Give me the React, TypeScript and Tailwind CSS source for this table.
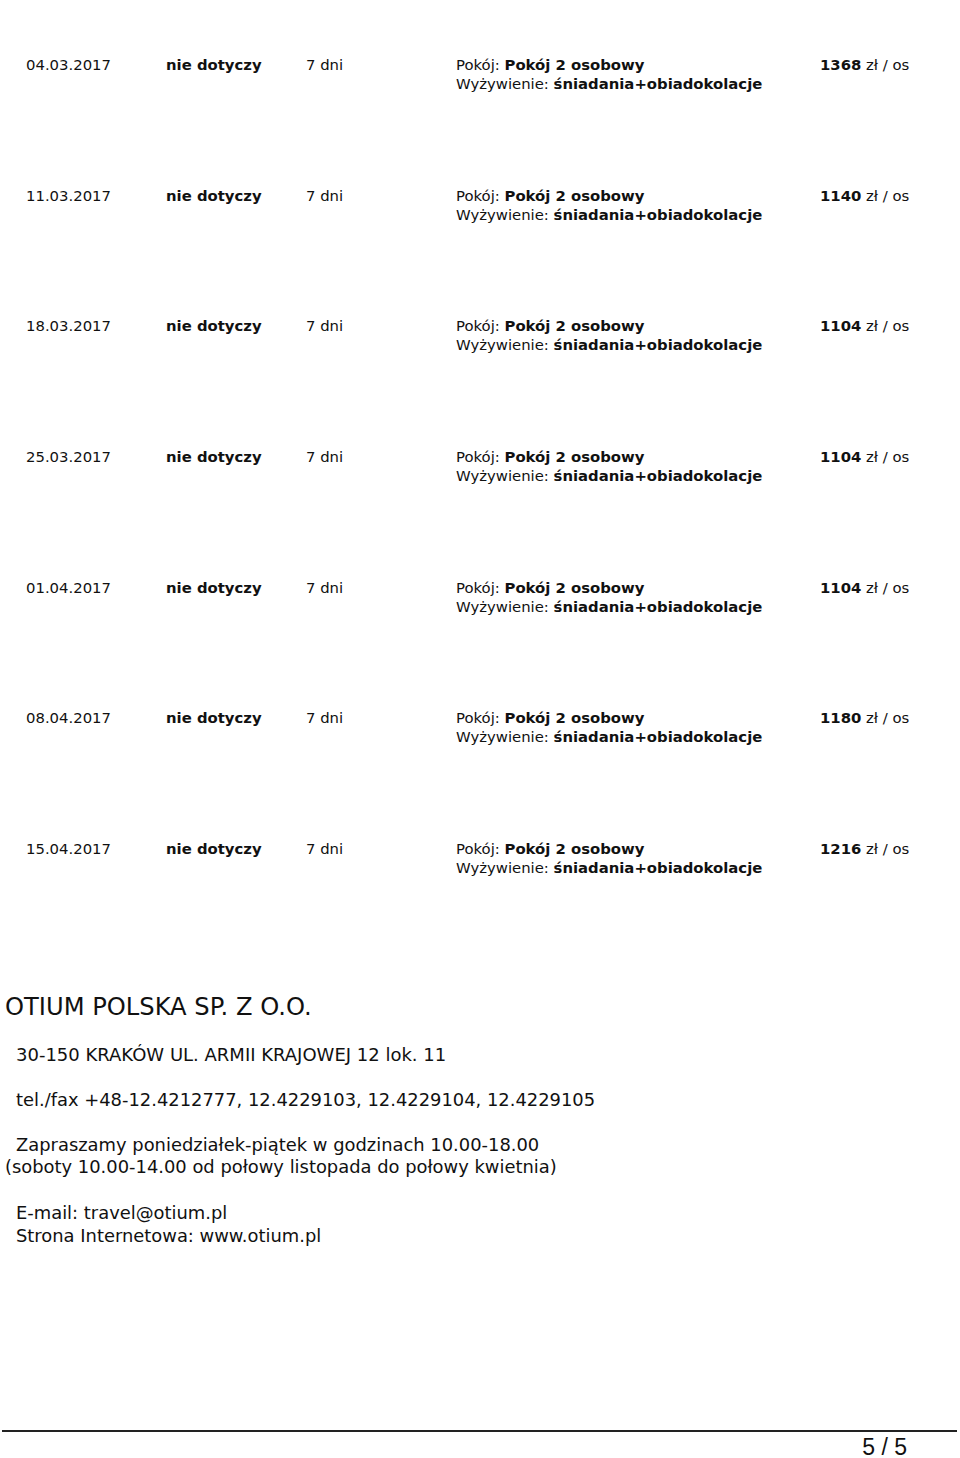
const rows = [
  { date: '04.03.2017', price: '1368' },
  { date: '11.03.2017', price: '1140' },
  { date: '18.03.2017', price: '1104' },
  { date: '25.03.2017', price: '1104' },
  { date: '01.04.2017', price: '1104' },
  { date: '08.04.2017', price: '1180' },
  { date: '15.04.2017', price: '1216' },
];

const font = { fontFamily: '"DejaVu Sans", sans-serif' };

export default function App() {
  return (
    <div className="relative w-[960px] h-[1458px] bg-white text-[#111] overflow-hidden" style={font}>
      {/* Terms table */}
      <div className="pt-[56px]">
        {rows.map((r) => (
          <div key={r.date} className="flex h-[130.7px] pl-[26px] text-[14.85px] leading-[19px]">
            <div className="w-[140px]">{r.date}</div>
            <div className="w-[140px] font-bold">nie dotyczy</div>
            <div className="w-[150px]">7 dni</div>
            <div className="w-[364px]">
              <div>
                Pokój: <span className="font-bold">Pokój 2 osobowy</span>
              </div>
              <div>
                Wyżywienie: <span className="font-bold">śniadania+obiadokolacje</span>
              </div>
            </div>
            <div>
              <span className="font-bold">{r.price}</span> zł / os
            </div>
          </div>
        ))}
      </div>

      {/* Company footer */}
      <div className="pt-[22px]">
        <div className="pl-[5px] text-[24.2px] leading-[28px]">OTIUM POLSKA SP. Z O.O.</div>
        <div className="pl-[16px] mt-[23px] text-[18px] leading-[22px]">
          30-150 KRAKÓW UL. ARMII KRAJOWEJ 12 lok. 11
        </div>
        <div className="pl-[16px] mt-[23px] text-[17.9px] leading-[22px]">
          tel./fax +48-12.4212777, 12.4229103, 12.4229104, 12.4229105
        </div>
        <div className="mt-[23px] text-[17.9px] leading-[22px]">
          <div className="pl-[16px]">Zapraszamy poniedziałek-piątek w godzinach 10.00-18.00</div>
          <div className="pl-[5px]">(soboty 10.00-14.00 od połowy listopada do połowy kwietnia)</div>
        </div>
        <div className="mt-[23px] pl-[16px] text-[17.9px] leading-[23px]">
          <div>E-mail: travel@otium.pl</div>
          <div>Strona Internetowa: www.otium.pl</div>
        </div>
      </div>

      {/* Page footer */}
      <div className="absolute left-0 right-0 top-[1430px]">
        <div className="ml-[2px] mr-[3px] h-[2px] bg-[#222]" />
        <div
          className="mt-[2px] pr-[53px] text-right text-[23px] leading-[26px]"
          style={{ fontFamily: '"Liberation Sans", Arial, sans-serif' }}
        >
          5 / 5
        </div>
      </div>
    </div>
  );
}
